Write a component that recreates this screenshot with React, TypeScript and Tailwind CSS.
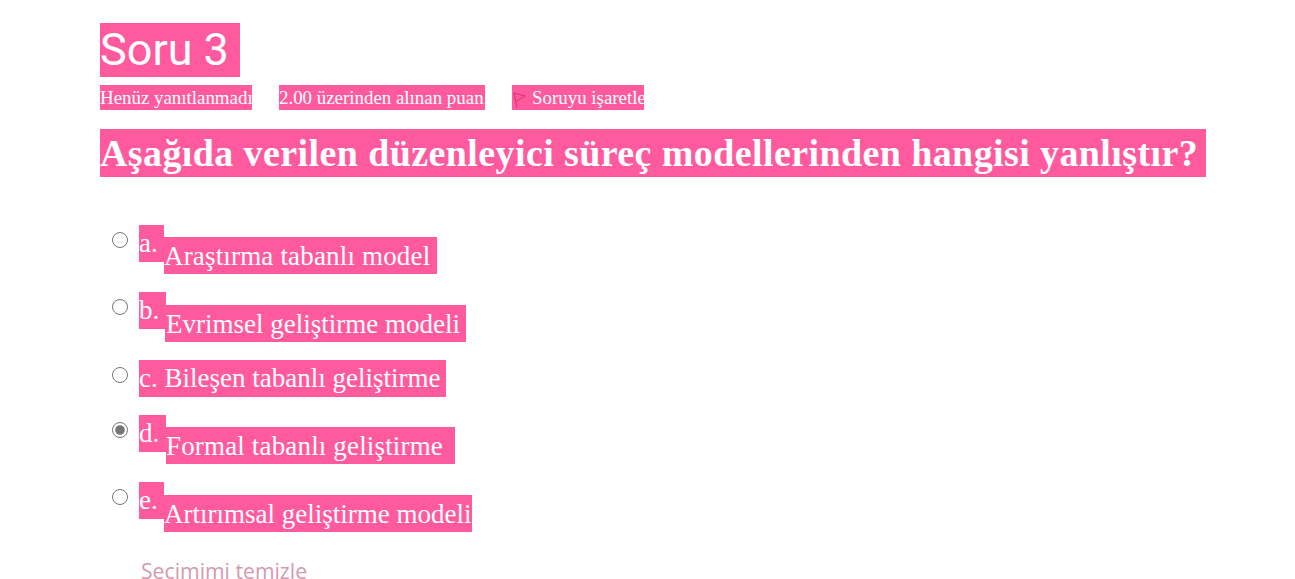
const options = [
  { letter: "a.", text: "Araştırma tabanlı model", letterW: "w-[25px]", textW: "w-[273px] tracking-[0.17px]", offset: "mt-[12px]" },
  { letter: "b.", text: "Evrimsel geliştirme modeli", letterW: "w-[27px]", textW: "w-[301px]", offset: "mt-[13px] -ml-[1px] pl-[1px]" },
  { letter: "d.", text: "Formal tabanlı geliştirme", letterW: "w-[27px]", textW: "w-[289px] tracking-[0.16px]", offset: "mt-[12px]", checked: true },
  { letter: "e.", text: "Artırımsal geliştirme modeli", letterW: "w-[25px]", textW: "w-[308px]", offset: "mt-[13px]" },
];

function Radio({ checked }: { checked?: boolean }) {
  return (
    <input
      type="radio"
      name="answer"
      defaultChecked={checked}
      className="m-0 mt-[7px] h-[15.5px] w-[15.5px] shrink-0 accent-[#757575]"
    />
  );
}

function Option({ option }: { option: (typeof options)[number] }) {
  return (
    <div className="flex items-start pl-[12px]">
      <Radio checked={option.checked} />
      <span className={`ml-[11.5px] h-[37px] shrink-0 bg-[#ff5a9e] text-[27px] leading-[37px] ${option.letterW}`}>
        {option.letter}
      </span>
      <span className={`h-[37px] shrink-0 whitespace-nowrap bg-[#ff5a9e] text-[27px] leading-[38px] ${option.textW} ${option.offset}`}>
        {option.text}
      </span>
    </div>
  );
}

export default function App() {
  return (
    <div className="h-[579px] overflow-hidden bg-white pl-[100px] pt-[23px] font-['Liberation_Serif',serif] text-white">
      <h3 className="h-[54px] w-[140px] bg-[#ff5a9e] font-['Roboto',sans-serif] text-[45px] leading-[54px]">Soru 3</h3>

      {/* Meta row */}
      <div className="mt-2 flex gap-[27px] text-[18.9px] leading-[25px]">
        <span className="h-[25px] w-[152px] whitespace-nowrap bg-[#ff5a9e]">Henüz yanıtlanmadı</span>
        <span className="h-[25px] w-[206px] whitespace-nowrap bg-[#ff5a9e]">2.00 üzerinden alınan puan</span>
        <span className="flex h-[25px] w-[132px] items-center gap-[5px] whitespace-nowrap bg-[#ff5a9e]">
          <svg width="15" height="17" viewBox="0 0 15 17" fill="none" className="mt-[4px] shrink-0">
            <path d="M5 17 2 2 13 5 4.2 10.5" stroke="#d8306f" strokeWidth="1" />
          </svg>
          Soruyu işaretle
        </span>
      </div>

      <h4 className="mt-[19px] h-[48px] w-[1106px] whitespace-nowrap bg-[#ff5a9e] text-[38px] font-bold leading-[48px] tracking-[0.4px]">
        Aşağıda verilen düzenleyici süreç modellerinden hangisi yanlıştır?
      </h4>

      {/* Answers */}
      <div className="mt-[48px] flex flex-col gap-[18px]">
        <Option option={options[0]} />
        <Option option={options[1]} />
        <div className="flex items-start pl-[12px]">
          <Radio />
          <span className="ml-[11.5px] h-[37px] w-[307px] whitespace-nowrap bg-[#ff5a9e] text-[27px] leading-[37px]">
            c. Bileşen tabanlı geliştirme
          </span>
        </div>
        <Option option={options[2]} />
        <Option option={options[3]} />
      </div>

      <a className="ml-[41px] mt-[22px] block font-['Open_Sans',sans-serif] text-[21.2px] leading-[33px] text-[#d29ab0]">Secimimi temizle</a>
    </div>
  );
}
